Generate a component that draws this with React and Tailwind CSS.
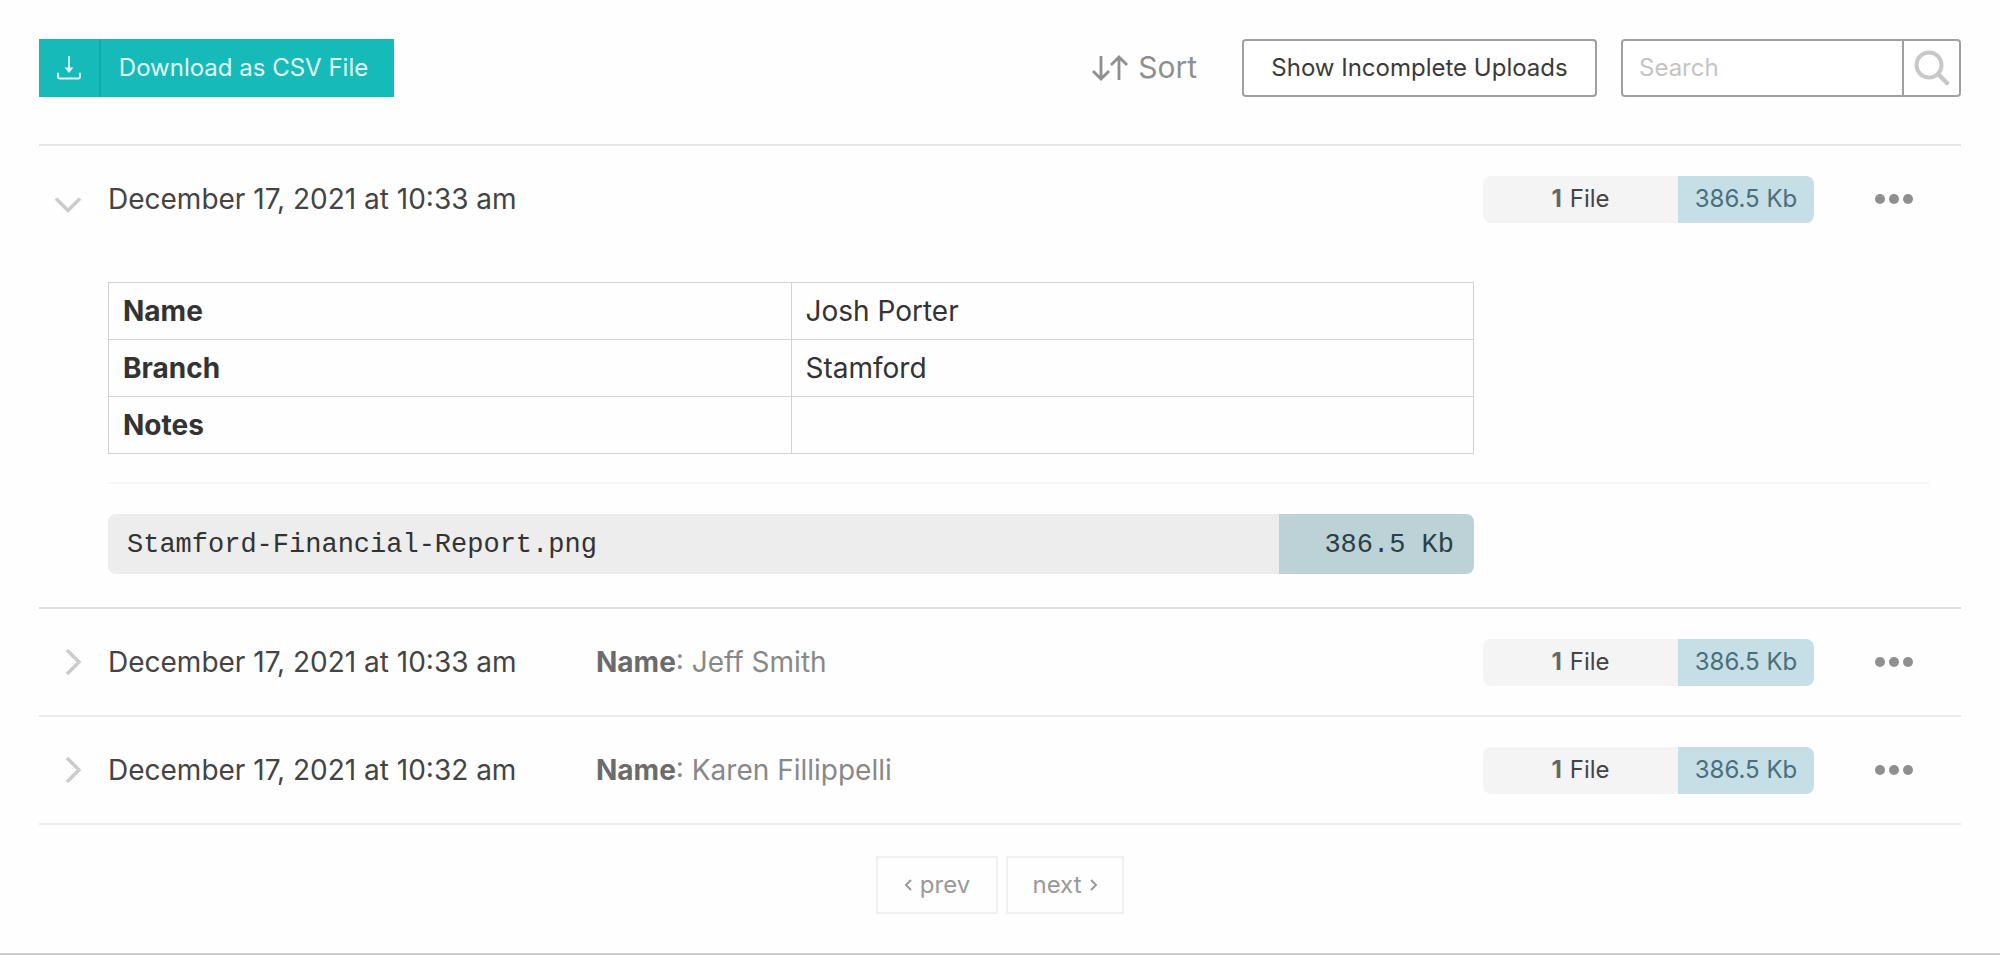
import { useState } from 'react'

const uploads = [
  {
    id: 1,
    date: 'December 17, 2021 at 10:33 am',
    fields: [
      { label: 'Name', value: 'Josh Porter' },
      { label: 'Branch', value: 'Stamford' },
      { label: 'Notes', value: '' },
    ],
    files: [{ name: 'Stamford-Financial-Report.png', size: '386.5 Kb' }],
    size: '386.5 Kb',
  },
  {
    id: 2,
    date: 'December 17, 2021 at 10:33 am',
    fields: [{ label: 'Name', value: 'Jeff Smith' }],
    files: [{ name: 'Financial-Report.png', size: '386.5 Kb' }],
    size: '386.5 Kb',
  },
  {
    id: 3,
    date: 'December 17, 2021 at 10:32 am',
    fields: [{ label: 'Name', value: 'Karen Fillippelli' }],
    files: [{ name: 'Financial-Report.png', size: '386.5 Kb' }],
    size: '386.5 Kb',
  },
]

function DownloadIcon() {
  return (
    <svg className="w-6 h-6" viewBox="0 0 24 24" fill="none" stroke="currentColor" strokeWidth="1.8">
      <path d="M12 0v12" />
      <path d="M7.5 11.5h9L12 17z" fill="currentColor" stroke="none" />
      <path d="M1 17.5v3.2q0 1.8 1.8 1.8h18.4q1.8 0 1.8-1.8v-3.2" strokeLinecap="round" />
    </svg>
  )
}

function SortIcon() {
  return (
    <svg className="w-9 h-[26px]" viewBox="0 0 36 26" fill="none" stroke="currentColor" strokeWidth="2.8">
      <path d="M9 1v23M1 16l8 8 8-8" />
      <path d="M27 25V2M19 10l8-8 8 8" />
    </svg>
  )
}

function SearchIcon() {
  return (
    <svg className="w-9 h-9" viewBox="0 0 36 36" fill="none" stroke="currentColor" strokeLinecap="round">
      <circle cx="15" cy="15" r="12.5" strokeWidth="4" />
      <path d="M24.5 24.5L33 33" strokeWidth="4.5" />
    </svg>
  )
}

function Chevron({ open }) {
  return open ? (
    <svg className="mt-3 w-7 h-4" viewBox="0 0 28 16" fill="none" stroke="currentColor" strokeWidth="3.5">
      <path d="M1 1.5l12 12 12-12" />
    </svg>
  ) : (
    <svg className="ml-[10px] w-[18px] h-7" viewBox="0 0 18 28" fill="none" stroke="currentColor" strokeWidth="3.5">
      <path d="M2 2l12 12-12 12" />
    </svg>
  )
}

function UploadRow({ upload, open, onToggle }) {
  const first = upload.fields[0]

  return (
    <li className={open ? 'border-b-2 border-[#dedede]' : 'border-b-2 border-[#ececec]'}>
      <div className="flex items-center h-[106px]">
        <button
          onClick={onToggle}
          aria-expanded={open}
          aria-label="Toggle upload details"
          className="w-[69px] h-full pl-4 flex items-center text-[#cccccc] shrink-0"
        >
          <Chevron open={open} />
        </button>
        <div className="w-[488px] text-[28px] text-[#444444] whitespace-nowrap shrink-0">{upload.date}</div>
        <div className="flex-1 text-[28px] text-[#888888] whitespace-nowrap">
          {!open && (
            <>
              <b className="font-bold text-[#6b6b6b]">{first.label}</b>: {first.value}
            </>
          )}
        </div>
        <div className="flex w-[331px] h-[47px] rounded-lg overflow-hidden text-2xl leading-[46px] text-center shrink-0">
          <div className="flex flex-1 justify-center gap-2 bg-[#f4f4f4] text-[#444444]">
            <b className="font-bold text-[#666666]">{upload.files.length}</b>
            <span>File</span>
          </div>
          <div className="w-[136px] bg-[#c6dfe6] text-[#4a6f7c]">{upload.size}</div>
        </div>
        <div className="w-[147px] flex justify-center pl-3 shrink-0">
          <button aria-label="More actions" className="flex gap-1 py-4">
            <span className="size-[10px] rounded-full bg-[#8f8f8f]" />
            <span className="size-[10px] rounded-full bg-[#8f8f8f]" />
            <span className="size-[10px] rounded-full bg-[#8f8f8f]" />
          </button>
        </div>
      </div>

      {open && (
        <div className="pl-[69px] pt-[30px] pb-[33px]">
          <div className="mr-[487px]">
            <table className="w-full table-fixed border-collapse text-[28px] text-[#333333]">
              <tbody>
                {upload.fields.map(f => (
                  <tr key={f.label} className="h-[57px]">
                    <th scope="row" className="border border-[#d2d2d2] px-[14px] text-left font-bold">{f.label}</th>
                    <td className="border border-[#d2d2d2] px-[14px]">{f.value}</td>
                  </tr>
                ))}
              </tbody>
            </table>
          </div>
          <hr className="mt-7 mb-[30px] mr-8 border-0 h-[2px] bg-[#f5f5f5]" />
          {upload.files.map(file => (
            <div
              key={file.name}
              className="mr-[487px] flex h-[60px] rounded-lg overflow-hidden font-['Liberation_Mono',monospace] text-[27px] leading-[62px] text-[#333333]"
            >
              <a href="#file" className="flex-1 bg-[#ededed] pl-[19px]">{file.name}</a>
              <div className="w-[195px] bg-[#bdd2d7] pr-5 text-right text-[#2a3f47]">{file.size}</div>
            </div>
          ))}
        </div>
      )}
    </li>
  )
}

function App() {
  const [openId, setOpenId] = useState(1)
  const [search, setSearch] = useState('')

  return (
    <div className="bg-[#fefefe] border-b-2 border-[#cccccc] px-[39px] pt-[39px] pb-[39px] font-['Inter',sans-serif]">
      {/* Toolbar */}
      <div className="flex items-center justify-between pb-[47px] text-2xl">
        <button className="flex items-center h-[58px] w-[355px] bg-[#15bab9] text-[#e2fbfa]">
          <span className="flex items-center justify-center w-[62px] h-full border-r-2 border-[#10adac]">
            <DownloadIcon />
          </span>
          <span className="flex-1 pr-2 text-center">Download as CSV File</span>
        </button>

        <div className="flex items-center">
          <button className="mr-[45px] flex items-center gap-[10px] text-[30px] text-[#8e8e8e]">
            <SortIcon />
            Sort
          </button>
          <button className="mr-6 h-[58px] w-[355px] rounded-sm border-2 border-[#a0a0a0] bg-white text-[#3a3a3a]">
            Show Incomplete Uploads
          </button>
          <form className="flex h-[58px] w-[340px] rounded-sm border-2 border-[#a0a0a0] bg-white" onSubmit={e => e.preventDefault()}>
            <input
              type="text"
              aria-label="Search"
              placeholder="Search"
              value={search}
              onChange={e => setSearch(e.target.value)}
              className="flex-1 min-w-0 px-4 outline-none placeholder:text-[#c4c4c4]"
            />
            <button aria-label="Submit search" className="flex w-[57px] items-center justify-center border-l-2 border-[#a0a0a0] text-[#c8c8c8]">
              <SearchIcon />
            </button>
          </form>
        </div>
      </div>

      {/* Uploads */}
      <ul className="border-t-2 border-[#e6e6e6]">
        {uploads.map(u => (
          <UploadRow key={u.id} upload={u} open={openId === u.id} onToggle={() => setOpenId(openId === u.id ? null : u.id)} />
        ))}
      </ul>

      {/* Pagination */}
      <div className="mt-[31px] flex justify-center gap-2 text-2xl text-[#999999]">
        <button className="flex items-center justify-center gap-2 h-[58px] w-[122px] border-2 border-[#f0f0f0]">
          <svg className="w-2 h-3" viewBox="0 0 8 12" fill="none" stroke="currentColor" strokeWidth="2">
            <path d="M7 1L2 6l5 5" />
          </svg>
          prev
        </button>
        <button className="flex items-center justify-center gap-2 h-[58px] w-[118px] border-2 border-[#f0f0f0]">
          next
          <svg className="w-2 h-3" viewBox="0 0 8 12" fill="none" stroke="currentColor" strokeWidth="2">
            <path d="M1 1l5 5-5 5" />
          </svg>
        </button>
      </div>
    </div>
  )
}

export default App
